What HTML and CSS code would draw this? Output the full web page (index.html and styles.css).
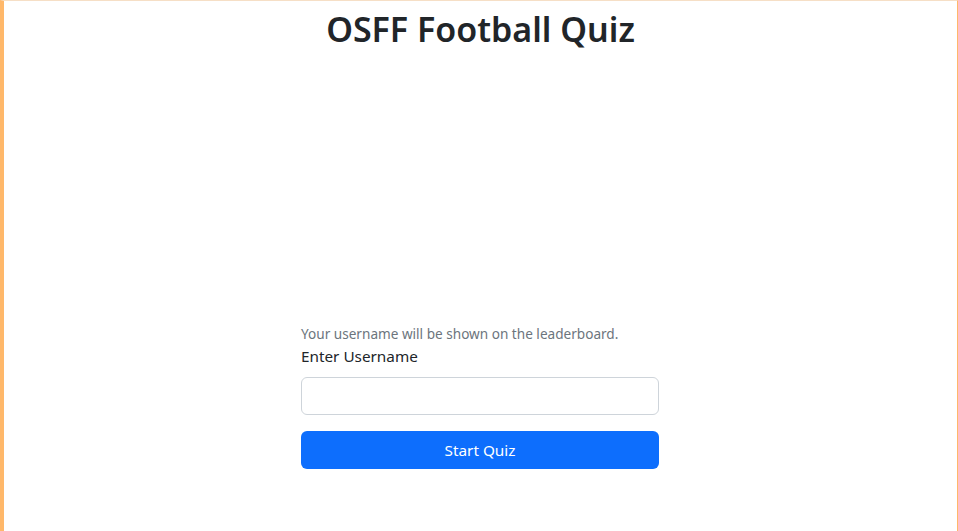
FILE: index.html
```html
<!DOCTYPE html>
<html lang="en">
<head>
<meta charset="utf-8">
<title>OSFF Football Quiz</title>
<link rel="stylesheet" href="styles.css">
</head>
<body>
<div class="frame">
  <h1 class="title">OSFF Football Quiz</h1>
  <div class="spacer"></div>
  <form class="login">
    <p class="hint">Your username will be shown on the leaderboard.</p>
    <label class="label" for="username">Enter Username</label>
    <input class="input" id="username" type="text">
    <button class="btn" type="button">Start Quiz</button>
  </form>
</div>
</body>
</html>
```

FILE: styles.css
```css
* { box-sizing: border-box; }
html, body { margin: 0; padding: 0; height: 100%; }
body {
  font-family: "Noto Sans", "Open Sans", sans-serif;
  color: #212529;
  background: #fff;
}
.frame {
  height: 531px;
  width: 958px;
  border-left: 4px solid #ffb86a;
  border-top: 1px solid #f6dfc6;
  border-right: 1px solid #ffb86a;
  display: flex;
  flex-direction: column;
  align-items: center;
}
.title {
  margin: 8px 0 0;
  font-size: 34px;
  font-weight: 600;
  line-height: 1.2;
  color: #212529;
}
.spacer { height: 274px; }
.login {
  width: 358px;
  margin-right: 1px;
  display: flex;
  flex-direction: column;
}
.hint {
  margin: 0 0 3px;
  font-size: 13.6px;
  color: #6c757d;
}
.label {
  font-size: 15.3px;
  margin-bottom: 11px;
}
.input {
  height: 38px;
  border: 1px solid #ced4da;
  border-radius: 6px;
  margin-bottom: 16px;
}
.btn {
  height: 38px;
  border: 0;
  border-radius: 6px;
  background: #0d6efd;
  color: #fff;
  font-family: inherit;
  font-size: 15.3px;
}
```
